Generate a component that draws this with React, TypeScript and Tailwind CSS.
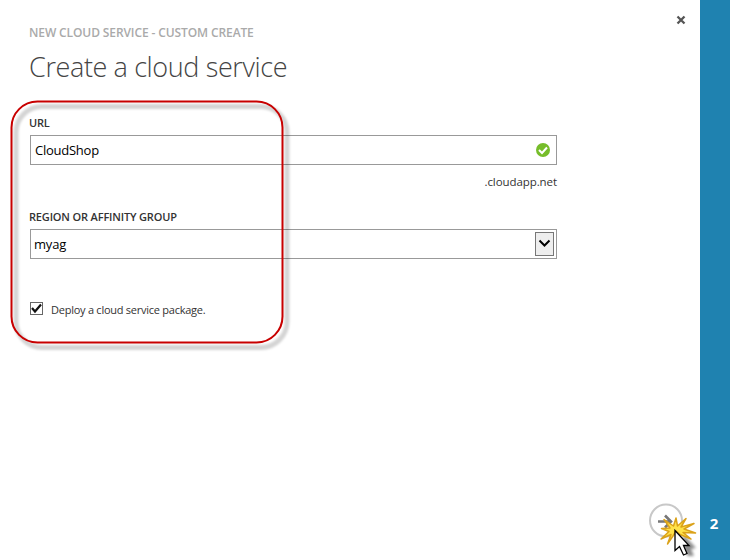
import React from "react";

function Field({ children }: { children: React.ReactNode }) {
  return (
    <div className="flex h-[30px] w-[527px] items-center justify-between border border-[#999] bg-white">
      {children}
    </div>
  );
}

function Highlight() {
  return (
    <svg className="pointer-events-none absolute left-0 top-[90px]" width="310" height="270" viewBox="0 90 310 270" fill="none">
      <defs>
        <filter id="soft" x="-10%" y="-10%" width="120%" height="120%">
          <feGaussianBlur stdDeviation="1.3" />
        </filter>
      </defs>
      <rect x="16" y="106.500" width="271" height="241" rx="26" stroke="#000" strokeOpacity=".17" strokeWidth="5" filter="url(#soft)" />
      <rect x="11.500" y="101.500" width="271" height="241" rx="26" stroke="#c80000" strokeWidth="2" />
    </svg>
  );
}

function NextStep() {
  return (
    <svg width="60" height="60" viewBox="640 500 60 60" fill="none">
      <defs>
        <filter id="cursorShadow" x="-50%" y="-50%" width="200%" height="200%">
          <feGaussianBlur stdDeviation="1.5" />
        </filter>
      </defs>
      <circle cx="666" cy="520.500" r="16" stroke="#c8c8c8" strokeWidth="2" />
      <path d="M658 521.500H671M665 515.500L671 521.500L665 527.500" stroke="#777" strokeWidth="2.600" />
      <path d="M679 534L692 548L687 549L690 556L684 556L680 550Z" fill="#000" opacity=".45" filter="url(#cursorShadow)" transform="translate(4 0)" />
      <path d="M676 518L677.500 526L686 518.500L681 527L694 523.500L684 529L695.500 533L683 532.500L691 539L680 534.500L676 531L673 536L667.500 544L671 534.500L661 539L669 531.500L661.500 528.500L670 528L664 519.500L673.500 526Z" fill="#ffe24a" stroke="#dba21a" strokeWidth="1.500" strokeLinejoin="round" />
      <path d="M675 530.500V550.500L679.500 546.500L683.500 555L687 553.500L683.500 545.500H689Z" fill="#fff" stroke="#000" strokeWidth="1.300" />
    </svg>
  );
}

export default function App() {
  return (
    <div className="relative flex h-[560px] w-[730px] overflow-hidden bg-white font-['Open_Sans','Noto_Sans',sans-serif] text-[#333]">
      <main className="flex w-[700px] flex-col pl-[30px]">
        <header className="flex h-[116px] justify-between">
          <div className="-ml-px pt-[25px]">
            <div className="whitespace-nowrap text-[12px] font-semibold leading-4 tracking-[-0.11px] text-[#aaa]">NEW CLOUD SERVICE - CUSTOM CREATE</div>
            <h1 className="mt-[8px] whitespace-nowrap text-[27px] font-light leading-[36px] tracking-[-0.38px] text-[#444]">Create a cloud service</h1>
          </div>
          <svg className="mr-[14px] mt-[15px]" width="10" height="10" viewBox="0 0 10 10">
            <path d="M1.500 1.500L8.500 8.500M8.500 1.500L1.500 8.500" stroke="#555" strokeWidth="2.300" />
          </svg>
        </header>
        <label className="-ml-px flex h-[19px] text-[11px] font-semibold leading-[13px] tracking-[-0.2px]">URL</label>
        <Field>
          <span className="pl-[4px] pt-px text-[13px] tracking-[-0.25px] text-black">CloudShop</span>
          <svg className="mr-[6px]" width="14" height="14" viewBox="0 0 14 14" fill="none">
            <circle cx="7" cy="7" r="7" fill="#76bd2a" />
            <path d="M3 7L6 10L11 4.500" stroke="#fff" strokeWidth="2" />
          </svg>
        </Field>
        <div className="mt-[9px] w-[527px] text-right text-[11.500px] leading-4 tracking-[-0.08px]">.cloudapp.net</div>
        <label className="-ml-px mt-[20px] flex h-[19px] text-[11px] font-semibold leading-[13px] tracking-[-0.16px]">REGION OR AFFINITY GROUP</label>
        <Field>
          <span className="pl-[3px] pt-px text-[13px] tracking-[-0.2px] text-black">myag</span>
          <span className="mr-[2px] flex h-[24px] w-[19px] items-center justify-center border border-[#777] bg-[#eee]">
            <svg className="-translate-y-px" width="13" height="9" viewBox="0 0 13 9" fill="none"><path d="M1.500 1.500L6.500 6.500L11.500 1.500" stroke="#000" strokeWidth="2" /></svg>
          </span>
        </Field>
        <div className="mt-[43px] flex items-start">
          <span className="flex h-[13px] w-[13px] items-center justify-center border border-[#666]">
            <svg width="11" height="11" viewBox="0 0 11 11" fill="none"><path d="M1 5L4 8.500L10 1.500" stroke="#111" strokeWidth="2.200" /></svg>
          </span>
          <span className="ml-[8px] whitespace-nowrap text-[11px] leading-4 tracking-[-0.25px]">Deploy a cloud service package.</span>
        </div>
        <div className="mt-auto flex justify-end">
          <NextStep />
        </div>
      </main>
      <aside className="flex w-[30px] items-end justify-center bg-[#1f82b0] pb-[27px] pr-[2px] text-[15px] font-bold leading-5 text-white">2</aside>
      <Highlight />
    </div>
  );
}
